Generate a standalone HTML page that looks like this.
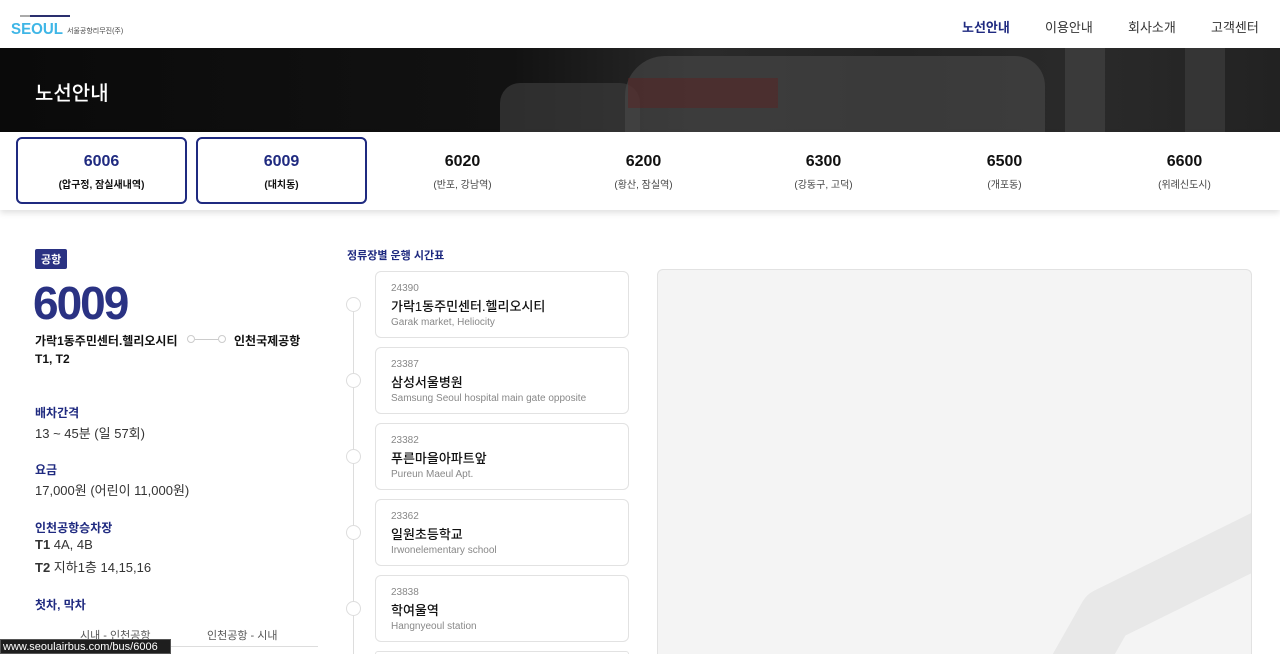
<!DOCTYPE html>
<html><head><meta charset="utf-8"><style>
*{margin:0;padding:0;box-sizing:border-box}
html,body{width:1280px;height:654px;overflow:hidden}
body{background:#fff;font-family:"Liberation Sans","Noto Sans CJK KR",sans-serif;color:#222;position:relative}
.hdr{height:48px;position:relative}
.nav{position:absolute;top:17px;font-size:13px;color:#333}
.banner{position:absolute;top:48px;left:0;width:1280px;height:84px;background:linear-gradient(90deg,#0a0a0a 0%,#121212 40%,#2a2a2a 55%,#242424 70%,#2a2a2a 85%,#222 100%);overflow:hidden}
.banner h1{position:absolute;left:35px;top:29px;color:#fff;font-size:20px;font-weight:500}
.tabs{position:absolute;top:132px;left:0;width:1280px;height:78px;background:#fff;box-shadow:0 3px 6px rgba(0,0,0,.12)}
.tab{position:absolute;top:5px;width:171px;height:67px;text-align:center}
.tab.on{border:2px solid #1f2a80;border-radius:6px}
.tab b{display:block;font-size:16px;font-weight:600;margin-top:16px;color:#111}
.tab.on b{color:#1f2a80;margin-top:14px}
.tab span{display:block;font-size:10px;color:#444;margin-top:5px}
.tab.on span{font-weight:700;color:#111}
.lbl{position:absolute;left:35px;font-size:12px;color:#1f2a80;font-weight:600}
.val{position:absolute;left:35px;font-size:13px;color:#333}
.card{position:absolute;left:375px;width:254px;height:67px;border:1px solid #e2e2e2;border-radius:6px;padding:11px 15px}
.card i{font-style:normal;display:block;font-size:10px;color:#888}
.card b{display:block;font-size:13px;font-weight:500;color:#111;margin-top:2px}
.card s{text-decoration:none;display:block;font-size:10px;color:#888;margin-top:2px}
.dot{position:absolute;left:346px;width:15px;height:15px;border:1px solid #ddd;border-radius:50%;background:#fff}
</style></head><body>
<div class="hdr">
<svg style="position:absolute;left:10px;top:13px" width="60" height="24"><rect x="20" y="2" width="40" height="2" fill="#2a2f6e"/><rect x="10" y="2" width="10" height="2" fill="#aaa"/><text x="1" y="21" font-family="Liberation Sans" font-weight="700" font-size="16" fill="#3fb6e6" textLength="52" lengthAdjust="spacingAndGlyphs">SEOUL</text></svg>
<span style="position:absolute;left:67px;top:26px;font-size:7px;color:#444">서울공항리무진(주)</span>
<span class="nav" style="left:962px;color:#1f2a80;font-weight:700">노선안내</span>
<span class="nav" style="left:1045px">이용안내</span>
<span class="nav" style="left:1128px">회사소개</span>
<span class="nav" style="left:1211px">고객센터</span>
</div>
<div class="banner"><h1>노선안내</h1>
<div style="position:absolute;left:500px;top:35px;width:140px;height:49px;background:#3a3a3a;border-radius:20px 20px 0 0;opacity:.7"></div>
<div style="position:absolute;left:625px;top:8px;width:420px;height:76px;background:#4a4a4a;border-radius:40px 30px 0 0;opacity:.6"></div>
<div style="position:absolute;left:628px;top:30px;width:150px;height:30px;background:#5a2222;opacity:.5"></div>
<div style="position:absolute;left:1065px;top:0;width:40px;height:84px;background:#3a3a3a"></div>
<div style="position:absolute;left:1185px;top:0;width:40px;height:84px;background:#353535"></div>
</div>
<div class="tabs">
<div class="tab on" style="left:16px"><b>6006</b><span>(압구정, 잠실새내역)</span></div>
<div class="tab on" style="left:196px"><b>6009</b><span>(대치동)</span></div>
<div class="tab" style="left:377px"><b>6020</b><span>(반포, 강남역)</span></div>
<div class="tab" style="left:558px"><b>6200</b><span>(황산, 잠실역)</span></div>
<div class="tab" style="left:738px"><b>6300</b><span>(강동구, 고덕)</span></div>
<div class="tab" style="left:919px"><b>6500</b><span>(개포동)</span></div>
<div class="tab" style="left:1099px"><b>6600</b><span>(위례신도시)</span></div>
</div>
<div style="position:absolute;left:35px;top:249px;background:#2a3283;color:#fff;font-size:11px;font-weight:700;padding:2px 6px;border-radius:2px">공항</div>
<div style="position:absolute;left:33px;top:276px;font-size:46px;font-weight:700;color:#2a3283;letter-spacing:-2px">6009</div>
<div style="position:absolute;left:35px;top:332px;font-size:12px;font-weight:700;color:#111">가락1동주민센터.헬리오시티</div>
<div style="position:absolute;left:187px;top:335px;width:8px;height:8px;border:1px solid #ccc;border-radius:50%"></div>
<div style="position:absolute;left:195px;top:339px;width:23px;height:1px;background:#ccc"></div>
<div style="position:absolute;left:218px;top:335px;width:8px;height:8px;border:1px solid #ccc;border-radius:50%"></div>
<div style="position:absolute;left:234px;top:332px;font-size:12px;font-weight:700;color:#111">인천국제공항</div>
<div style="position:absolute;left:35px;top:352px;font-size:12px;font-weight:700;color:#111">T1, T2</div>
<div class="lbl" style="top:404px">배차간격</div><div class="val" style="top:423px">13 ~ 45분 (일 57회)</div>
<div class="lbl" style="top:461px">요금</div><div class="val" style="top:480px">17,000원 (어린이 11,000원)</div>
<div class="lbl" style="top:519px">인천공항승차장</div>
<div class="val" style="top:537px"><b>T1</b> 4A, 4B</div>
<div class="val" style="top:557px"><b>T2</b> 지하1층 14,15,16</div>
<div class="lbl" style="top:596px">첫차, 막차</div>
<div style="position:absolute;left:80px;top:627px;font-size:11px;color:#555">시내 - 인천공항</div>
<div style="position:absolute;left:207px;top:627px;font-size:11px;color:#555">인천공항 - 시내</div>
<div style="position:absolute;left:35px;top:646px;width:283px;height:1px;background:#ddd"></div>
<div style="position:absolute;left:0;top:639px;width:171px;height:15px;background:#1e1e1e;border:1px solid #555;color:#fff;font-size:11px;padding-left:2px;line-height:14px">www.seoulairbus.com/bus/6006</div>
<div style="position:absolute;left:347px;top:247px;font-size:11px;font-weight:600;color:#1f2a80">정류장별 운행 시간표</div>
<div style="position:absolute;left:353px;top:300px;width:1px;height:354px;background:#ddd"></div>
<div class="dot" style="top:297px"></div><div class="card" style="top:271px"><i>24390</i><b>가락1동주민센터.헬리오시티</b><s>Garak market, Heliocity</s></div>
<div class="dot" style="top:373px"></div><div class="card" style="top:347px"><i>23387</i><b>삼성서울병원</b><s>Samsung Seoul hospital main gate opposite</s></div>
<div class="dot" style="top:449px"></div><div class="card" style="top:423px"><i>23382</i><b>푸른마을아파트앞</b><s>Pureun Maeul Apt.</s></div>
<div class="dot" style="top:525px"></div><div class="card" style="top:499px"><i>23362</i><b>일원초등학교</b><s>Irwonelementary school</s></div>
<div class="dot" style="top:601px"></div><div class="card" style="top:575px"><i>23838</i><b>학여울역</b><s>Hangnyeoul station</s></div>
<div style="position:absolute;left:375px;top:651px;width:254px;height:3px;border:1px solid #e2e2e2;border-bottom:none;border-radius:6px 6px 0 0"></div>
<div style="position:absolute;left:657px;top:269px;width:595px;height:385px;background:#f4f4f4;border:1px solid #e2e2e2;border-bottom:none;border-radius:6px 6px 0 0;overflow:hidden">
<svg width="595" height="385" style="position:absolute;left:0;top:0"><path d="M640 250 L448 345 L360 500" stroke="#e8e8e8" stroke-width="54" fill="none" stroke-linejoin="round"/></svg>
</div>
</body></html>
